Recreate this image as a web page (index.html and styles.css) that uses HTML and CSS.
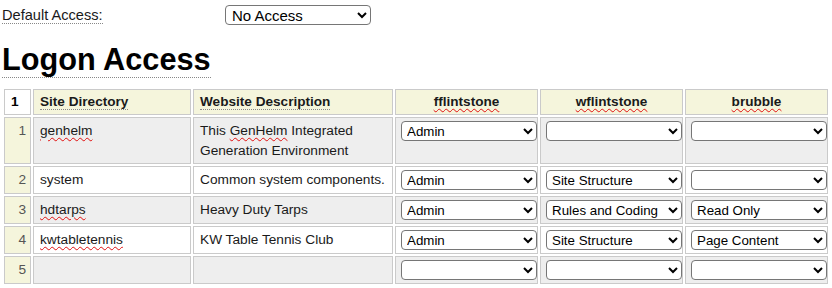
FILE: index.html
```html
<!DOCTYPE html>
<html lang="en">
<head>
    <meta charset="UTF-8">
    <title>Logon Access</title>
    <link rel="stylesheet" href="styles.css">
</head>
<body>
    <div class="default-row">
        <label for="defaultAccess"><span class="hint">Default Access:</span></label>
        <select id="defaultAccess" class="default-select">
            <option>No Access</option>
            <option>Read Only</option>
            <option>Page Content</option>
            <option>Site Structure</option>
            <option>Rules and Coding</option>
            <option>Admin</option>
        </select>
    </div>
    <h1><span class="hint">Logon Access</span></h1>
    <table class="access">
        <thead>
            <tr>
                <th class="num-head">1</th>
                <th class="dir"><span class="hint">Site Directory</span></th>
                <th class="desc"><span class="hint">Website Description</span></th>
                <th class="user"><span class="typo">fflintstone</span></th>
                <th class="user"><span class="typo">wflintstone</span></th>
                <th class="user"><span class="typo">brubble</span></th>
            </tr>
        </thead>
        <tbody>
            <tr class="odd">
                <td class="num">1</td>
                <td><span class="typo">genhelm</span></td>
                <td>This <span class="typo">GenHelm</span> Integrated Generation Environment</td>
                <td class="pick"><select><option>Admin</option></select></td>
                <td class="pick"><select><option></option></select></td>
                <td class="pick"><select><option></option></select></td>
            </tr>
            <tr>
                <td class="num">2</td>
                <td>system</td>
                <td>Common system components.</td>
                <td class="pick"><select><option>Admin</option></select></td>
                <td class="pick"><select><option>Site Structure</option></select></td>
                <td class="pick"><select><option></option></select></td>
            </tr>
            <tr class="odd">
                <td class="num">3</td>
                <td><span class="typo">hdtarps</span></td>
                <td>Heavy Duty Tarps</td>
                <td class="pick"><select><option>Admin</option></select></td>
                <td class="pick"><select><option>Rules and Coding</option></select></td>
                <td class="pick"><select><option>Read Only</option></select></td>
            </tr>
            <tr>
                <td class="num">4</td>
                <td><span class="typo">kwtabletennis</span></td>
                <td>KW Table Tennis Club</td>
                <td class="pick"><select><option>Admin</option></select></td>
                <td class="pick"><select><option>Site Structure</option></select></td>
                <td class="pick"><select><option>Page Content</option></select></td>
            </tr>
            <tr class="odd">
                <td class="num">5</td>
                <td></td>
                <td></td>
                <td class="pick"><select><option></option></select></td>
                <td class="pick"><select><option></option></select></td>
                <td class="pick"><select><option></option></select></td>
            </tr>
        </tbody>
    </table>
</body>
</html>
```

FILE: styles.css
```css
body {
    font-family: "Liberation Sans", Arial, sans-serif;
    color: #1a1a1a;
    background-color: #fff;
    margin: 0 2px;
}
.hint {
    border-bottom: 1px dotted #888;
}
.typo {
    text-decoration: underline wavy #e01010;
    text-decoration-thickness: 1px;
    text-underline-offset: 2px;
}
.default-row {
    display: flex;
    align-items: center;
    padding-top: 5px;
    height: 20px;
}
.default-row label {
    width: 223px;
    font-size: 14.6px;
    line-height: 17px;
}
select {
    font-family: "Liberation Sans", Arial, sans-serif;
    font-size: 13.33px;
    height: 20px;
    color: #000;
    background-color: #fff;
    border: 1px solid #767676;
    border-radius: 4px;
    padding: 0 0 0 1px;
    box-sizing: border-box;
}
.default-select {
    width: 146px;
    font-size: 15px;
    padding-left: 2px;
}
h1 {
    font-size: 30.7px;
    line-height: 34px;
    margin: 18px 0 9px;
    color: #000;
}
h1 .hint {
    display: inline-block;
    line-height: 34px;
}
.access {
    border-collapse: separate;
    border-spacing: 2px;
    table-layout: fixed;
    width: 828px;
    font-size: 13.7px;
}
.access th, .access td {
    border: 1px solid #cacaca;
    box-sizing: border-box;
    line-height: 19.5px;
    vertical-align: top;
    padding: 3px 6px;
}
.access th {
    background-color: #f5f5dc;
    font-size: 13.6px;
    line-height: 18px;
    text-align: left;
}
.access th.num-head {
    background-color: #fff;
    color: #000;
    width: 27px;
}
.access th.dir {
    width: 158px;
}
.access th.desc {
    width: 200px;
}
.access th.user {
    width: 143px;
    text-align: center;
}
.access td.num {
    background-color: #f5f5dc;
    color: #555;
    text-align: right;
    padding-right: 4px;
}
.access tr.odd td {
    background-color: #eee;
}
.access tr.odd td.num {
    background-color: #f5f5dc;
}
.access td.pick {
    padding: 3px 0 3px 5px;
}
.access td.pick select {
    width: 100%;
    display: block;
}
```
